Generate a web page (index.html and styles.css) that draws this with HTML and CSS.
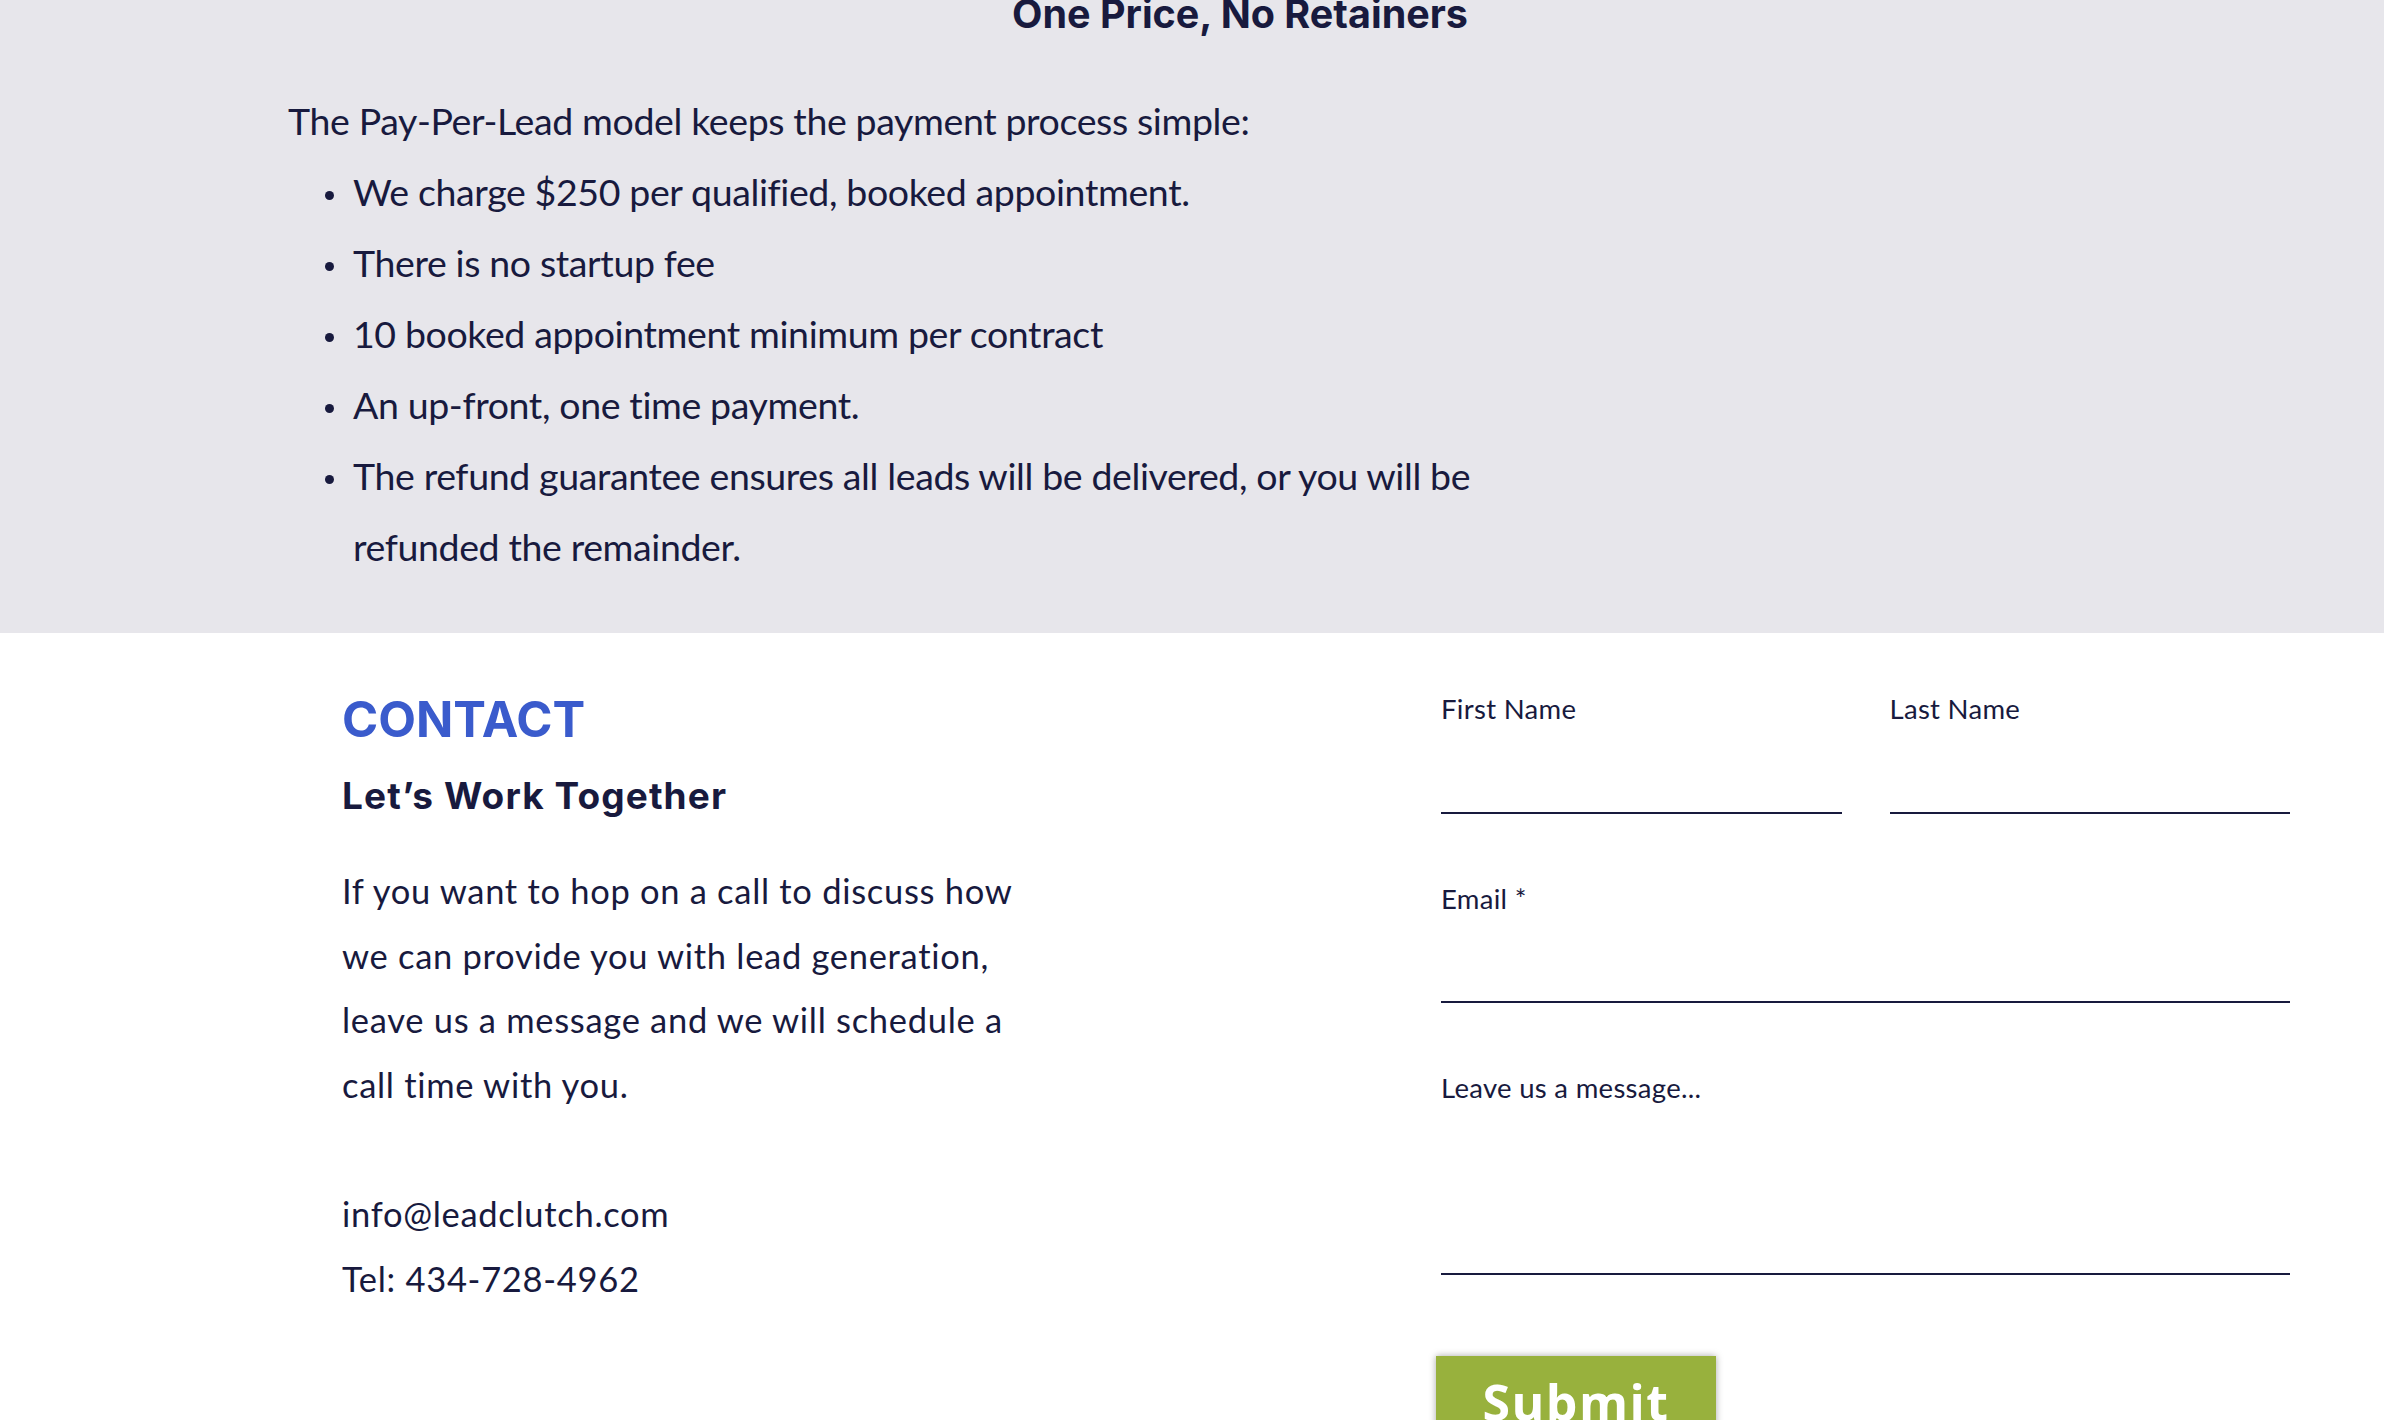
FILE: index.html
```html
<!DOCTYPE html>
<html lang="en">
<head>
<meta charset="utf-8">
<title>Lead Clutch – Pricing &amp; Contact</title>
<link rel="stylesheet" href="styles.css">
</head>
<body>
<section class="pricing">
  <div class="pricing-inner">
    <h2 class="pricing-title">One Price, No Retainers</h2>
    <p class="pricing-lead">The Pay-Per-Lead model keeps the payment process simple:</p>
    <ul class="pricing-list">
      <li>We charge $250 per qualified, booked appointment.</li>
      <li>There is no startup fee</li>
      <li>10 booked appointment minimum per contract</li>
      <li>An up-front, one time payment.</li>
      <li>The refund guarantee ensures all leads will be delivered, or you will be<br>refunded the remainder.</li>
    </ul>
  </div>
</section>
<section class="contact">
  <div class="contact-info">
    <h2 class="contact-kicker">CONTACT</h2>
    <h3 class="contact-title">Let’s Work Together</h3>
    <p class="contact-text">If you want to hop on a call to discuss how<br>we can provide you with lead generation,<br>leave us a message and we will schedule a<br>call time with you.</p>
    <p class="contact-text contact-details">info@leadclutch.com<br>Tel: 434-728-4962</p>
  </div>
  <form class="contact-form">
    <div class="form-row">
      <label class="field">
        <span class="field-label">First Name</span>
        <input class="field-input" type="text" name="first">
      </label>
      <label class="field">
        <span class="field-label">Last Name</span>
        <input class="field-input" type="text" name="last">
      </label>
    </div>
    <label class="field field-email">
      <span class="field-label">Email *</span>
      <input class="field-input" type="email" name="email" required>
    </label>
    <textarea class="field-message" name="message" placeholder="Leave us a message..."></textarea>
    <button class="submit-btn" type="button">Submit</button>
  </form>
</section>
</body>
</html>
```

FILE: styles.css
```css
* { box-sizing: border-box; }

html, body {
  margin: 0;
  padding: 0;
  background: #ffffff;
  color: #181a3e;
  font-family: "Lato", "Liberation Sans", sans-serif;
  overflow: hidden;
}

.pricing {
  background: #e7e6eb;
  padding: 0 192px 51px 288px;
}

.pricing-title {
  margin: -10px 0 0;
  font-family: "Inter", "Roboto", sans-serif;
  font-weight: 700;
  font-size: 39.5px;
  line-height: 48px;
  text-align: center;
  color: #181a3e;
}

.pricing-lead {
  margin: 47px 0 0;
  font-size: 37.5px;
  line-height: 71px;
  letter-spacing: -0.38px;
}

.pricing-list {
  list-style: none;
  margin: 0;
  padding: 0;
  font-size: 37.5px;
  line-height: 71px;
  letter-spacing: -0.38px;
}

.pricing-list li {
  display: flex;
  align-items: flex-start;
}

.pricing-list li::before {
  content: "";
  flex: none;
  width: 9px;
  height: 9px;
  border-radius: 50%;
  background: #181a3e;
  margin: 35px 19px 0 37px;
}

.contact {
  display: flex;
  padding: 58px 0 0 342px;
}

.contact-info {
  width: 1099px;
  flex: none;
}

.contact-kicker {
  margin: 0;
  font-family: "Inter", "Roboto", sans-serif;
  font-weight: 700;
  font-size: 49px;
  line-height: 1.2;
  color: #3a5bcc;
}

.contact-title {
  margin: 24px 0 0;
  font-family: "Inter", "Roboto", sans-serif;
  font-weight: 700;
  font-size: 37px;
  line-height: 1.2;
  letter-spacing: 1.1px;
  color: #181a3e;
}

.contact-text {
  margin: 41px 0 0;
  font-size: 34.5px;
  line-height: 64.5px;
  letter-spacing: 0.7px;
}

.contact-details {
  margin-top: 65px;
}

.contact-form {
  width: 849px;
  flex: none;
  padding-top: 3px;
  display: flex;
  flex-direction: column;
  align-items: flex-start;
}

.form-row {
  display: flex;
  gap: 48px;
  width: 100%;
}

.field {
  display: flex;
  flex-direction: column;
  flex: 1;
  width: 100%;
}

.field-label {
  font-size: 27.5px;
  line-height: 30px;
  letter-spacing: 0.3px;
}

.field-input {
  display: block;
  width: 100%;
  height: 90px;
  border: none;
  border-bottom: 2px solid #181a3e;
  background: transparent;
  font: inherit;
  font-size: 27px;
  color: #181a3e;
  outline: none;
  padding: 0;
}

.field-email {
  margin-top: 70px;
  flex: none;
}

.field-email .field-input {
  height: 89px;
}

.field-message {
  display: block;
  width: 100%;
  height: 206px;
  margin-top: 66px;
  padding: 4px 0 0;
  border: none;
  border-bottom: 2px solid #181a3e;
  background: transparent;
  font-family: "Lato", "Liberation Sans", sans-serif;
  font-size: 27.5px;
  line-height: 30px;
  letter-spacing: 0.3px;
  color: #181a3e;
  resize: none;
  outline: none;
}

.field-message::placeholder {
  color: #181a3e;
  opacity: 1;
}

.submit-btn {
  margin: 81px 0 0 -5px;
  width: 280px;
  height: 92px;
  border: none;
  background: #98b13d;
  color: #ffffff;
  font-family: "Open Sans", "Liberation Sans", sans-serif;
  font-weight: 700;
  font-size: 50px;
  line-height: 92px;
  letter-spacing: 1.5px;
  padding: 0;
  box-shadow: 0 0 7px rgba(0, 0, 0, 0.35);
  cursor: pointer;
}
```
